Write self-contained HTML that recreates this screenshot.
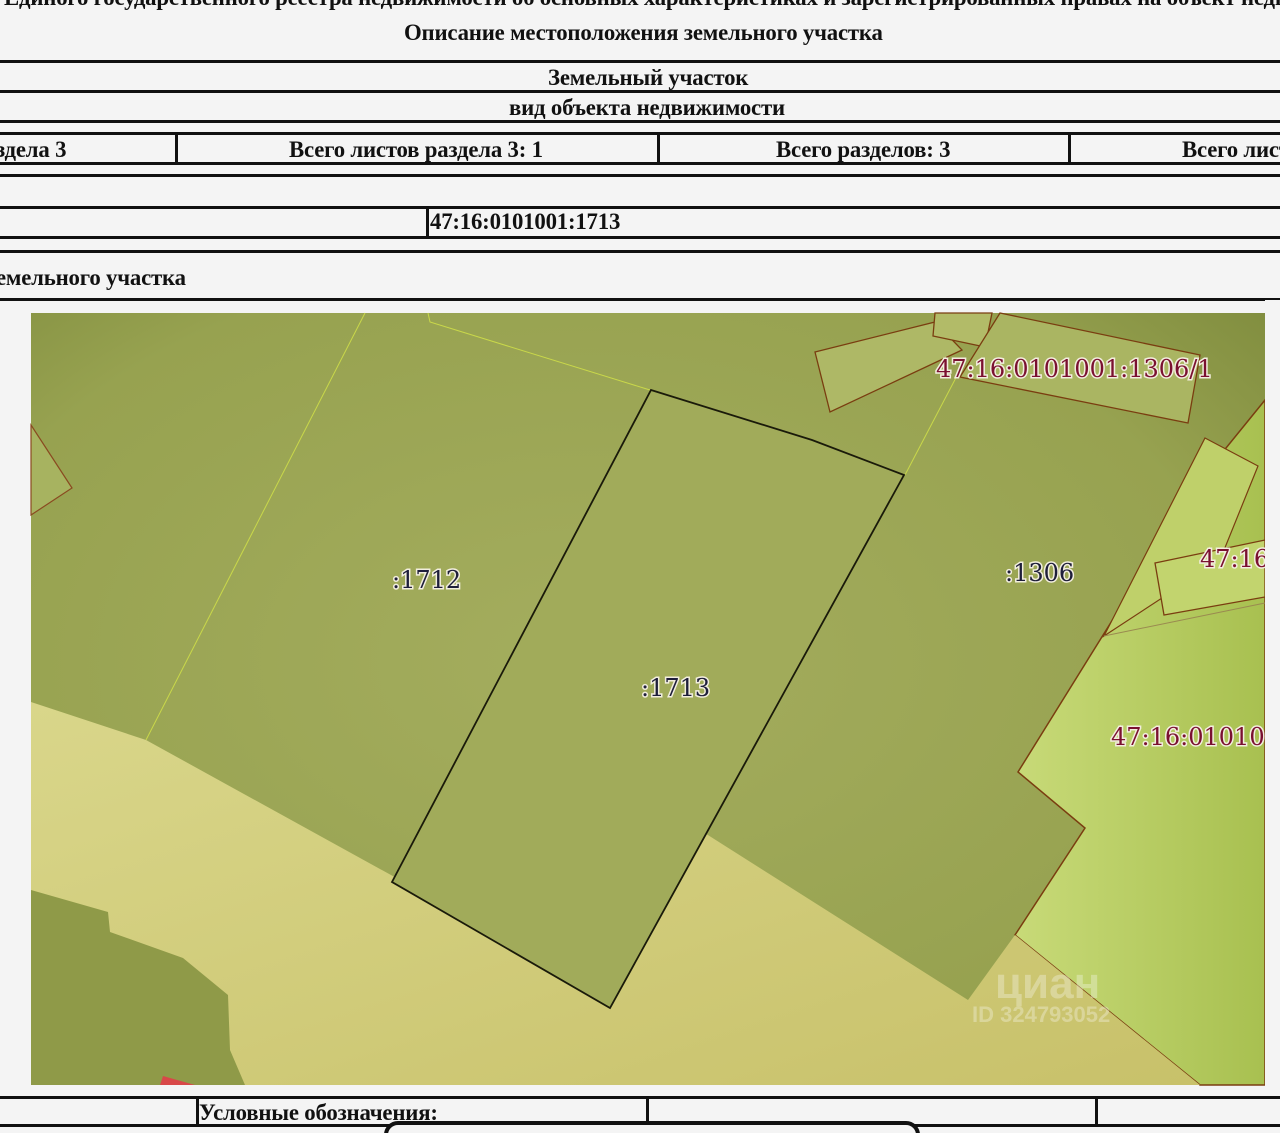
<!DOCTYPE html>
<html><head><meta charset="utf-8"><style>
html,body{margin:0;padding:0;background:#f4f4f4;width:1280px;height:1133px;overflow:hidden;position:relative;font-family:"Liberation Serif",serif;color:#111}
#w{position:absolute;left:0;top:0;width:1280px;height:1133px;overflow:hidden}
.t{position:absolute;white-space:nowrap;font-size:22.8px;font-weight:bold;letter-spacing:-0.2px}
.c{overflow:hidden}
.h{position:absolute;left:0;width:1280px;background:#111}
.v{position:absolute;width:3px;background:#111}
</style></head><body><div id="w">
<div class="t c" style="left:4px;top:-15px;width:1276px">Единого государственного реестра недвижимости об основных характеристиках и зарегистрированных правах на объект недвижимости</div>
<div class="t" style="left:404px;top:20px">Описание местоположения земельного участка</div>
<div class="h" style="top:60px;height:3px"></div>
<div class="t" style="left:548px;top:65px">Земельный участок</div>
<div class="h" style="top:90px;height:3px"></div>
<div class="t" style="left:509px;top:95px">вид объекта недвижимости</div>
<div class="h" style="top:120px;height:3px"></div>
<div class="h" style="top:132px;height:3px"></div>
<div class="v" style="left:175px;top:133px;height:31px"></div>
<div class="v" style="left:657px;top:133px;height:31px"></div>
<div class="v" style="left:1068px;top:133px;height:31px"></div>
<div class="t c" style="left:0;top:137px;width:170px;text-indent:-4px">здела 3</div>
<div class="t" style="left:289px;top:137px">Всего листов раздела 3: 1</div>
<div class="t" style="left:776px;top:137px">Всего разделов: 3</div>
<div class="t c" style="left:1182px;top:137px;width:98px">Всего листов</div>
<div class="h" style="top:162px;height:3px"></div>
<div class="h" style="top:174px;height:3px"></div>
<div class="h" style="top:206px;height:3px"></div>
<div class="v" style="left:426px;top:207px;height:31px"></div>
<div class="t" style="left:430px;top:209px">47:16:0101001:1713</div>
<div class="h" style="top:236px;height:3px"></div>
<div class="h" style="top:250px;height:3px"></div>
<div class="t c" style="left:0;top:265px;width:300px;text-indent:-4px">емельного участка</div>
<div class="h" style="top:298px;height:3px"></div>

<svg style="position:absolute;left:0;top:0" width="1280" height="1133">
<defs>
<radialGradient id="g1" cx="0.45" cy="0.45" r="0.75"><stop offset="0" stop-color="#a4ad5e"/><stop offset="0.7" stop-color="#97a250"/><stop offset="1" stop-color="#7d8a3c"/></radialGradient>
<linearGradient id="rd" x1="0" y1="0" x2="1" y2="1"><stop offset="0" stop-color="#d9d68a"/><stop offset="1" stop-color="#c8c16a"/></linearGradient>
<linearGradient id="lg" x1="0" y1="0" x2="1" y2="0"><stop offset="0" stop-color="#c8da78"/><stop offset="1" stop-color="#a8c050"/></linearGradient>
</defs>
<rect x="31" y="313" width="1234" height="772" fill="url(#g1)"/>
<polygon points="1265,400 1200,480 1100,640 1018,772 1085,828 1015,935 1200,1085 1265,1085" fill="url(#lg)" stroke="#7a3d10" stroke-width="1.5"/>
<polygon points="31,702 146,740 400,880 700,830 968,1000 1015,935 1200,1085 31,1085" fill="url(#rd)"/>
<polygon points="31,890 108,912 110,932 183,958 228,995 230,1050 245,1085 31,1085" fill="#8f9a48"/>
<polygon points="160,1085 163,1076 195,1085" fill="#d84848"/>
<polygon points="31,425 72,488 31,515" fill="#a7b360" stroke="#8a4a20" stroke-width="1.2"/>
<line x1="146" y1="740" x2="365" y2="313" stroke="#c9d84a" stroke-width="1"/>
<line x1="905" y1="475" x2="960" y2="370" stroke="#c9d84a" stroke-width="1"/>
<polyline points="428,313 430,322 650,390" fill="none" stroke="#c9d84a" stroke-width="1"/>
<polygon points="651,390 812,440 904,475 610,1008 392,882" fill="#a1ab5a" stroke="#1a1a0a" stroke-width="1.8"/>
<polygon points="815,352 935,322 962,350 830,412" fill="#aeb866" stroke="#7a3d10" stroke-width="1.3"/>
<polygon points="935,313 992,313 985,347 933,336" fill="#b2bb68" stroke="#7a3d10" stroke-width="1.3"/>
<polygon points="1000,313 1200,355 1188,423 960,377" fill="#aab562" stroke="#7a3d10" stroke-width="1.3"/>
<polygon points="1205,438 1258,466 1220,560 1104,636" fill="#bfd06a" stroke="#7a3d10" stroke-width="1.2"/>
<polygon points="1155,563 1265,540 1265,597 1164,615" fill="#c2d46e" stroke="#7a3d10" stroke-width="1.3"/>
<line x1="1104" y1="636" x2="1265" y2="603" stroke="#9a8a50" stroke-width="1"/>
<g font-family="DejaVu Serif, serif" font-size="24" stroke="#f2eede" stroke-width="3" paint-order="stroke">
<text x="392" y="588" fill="#1e1e3a">:1712</text>
<text x="641" y="696" fill="#1e1e3a">:1713</text>
<text x="1005" y="581" fill="#1e1e3a">:1306</text>
<text x="936" y="377" fill="#7a1030">47:16:0101001:1306/1</text>
<text x="1200" y="567" fill="#7a1030">47:16</text>
<text x="1111" y="745" fill="#7a1030">47:16:01010</text>
</g>
<g fill="#ffffff" opacity="0.3" font-family="Liberation Sans, sans-serif" font-weight="bold">
<text x="995" y="998" font-size="44">циан</text>
<text x="972" y="1022" font-size="22">ID 324793052</text>
</g>
<rect x="0" y="1085" width="31" height="48" fill="#f4f4f4"/>
<rect x="1265" y="300" width="15" height="800" fill="#f4f4f4"/>
</svg>
<div class="h" style="top:1096px;height:3px"></div>
<div class="v" style="left:196px;top:1097px;height:30px"></div>
<div class="v" style="left:646px;top:1097px;height:30px"></div>
<div class="v" style="left:1095px;top:1097px;height:30px"></div>
<div class="t" style="left:199px;top:1100px">Условные обозначения:</div>
<div class="h" style="top:1124px;height:3px"></div>
<div style="position:absolute;left:384px;top:1121px;width:528px;height:30px;border:4px solid #111;border-radius:14px;background:#f4f4f4"></div>
</div></body></html>
